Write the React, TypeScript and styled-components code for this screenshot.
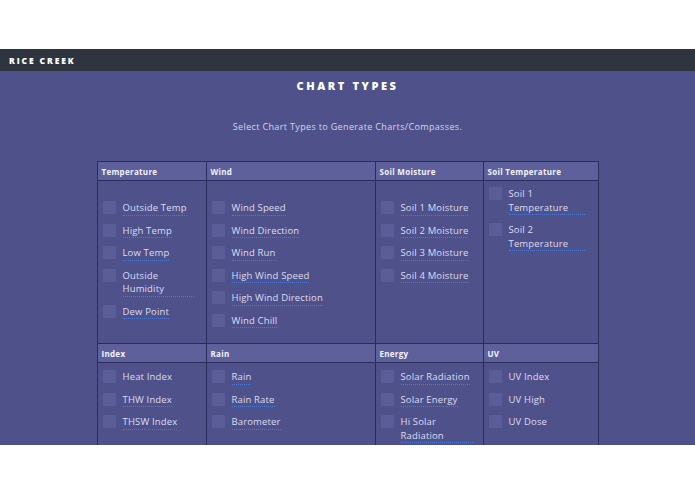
import React from 'react';
import styled, { createGlobalStyle } from 'styled-components';

interface ChartOption {
  label: string;
  underlined?: boolean;
}

interface ChartGroup {
  title: string;
  padTop?: number;
  options: ChartOption[];
}

const GlobalStyle = createGlobalStyle`
  html, body {
    margin: 0;
    padding: 0;
    background: #ffffff;
  }
  body {
    font-family: "Open Sans", "Liberation Sans", sans-serif;
  }
`;

const Page = styled.div`
  padding-top: 49px;
  width: 695px;
`;

const NavBar = styled.header`
  height: 22px;
  background-color: #2f353e;
  display: flex;
  align-items: center;
  padding-left: 9px;
`;

const Brand = styled.div`
  color: #ffffff;
  font-size: 8.5px;
  font-weight: 800;
  letter-spacing: 1.9px;
`;

const Main = styled.main`
  height: 374px;
  overflow: hidden;
  background-color: #4f528a;
  display: flex;
  flex-direction: column;
  align-items: center;
`;

// the bottom of a link that sits hidden under the nav bar
const KickerStub = styled.div`
  width: 40px;
  height: 2px;
  margin-left: 1px;
  background:
    linear-gradient(#a9abd4, #a9abd4) bottom / 100% 1px no-repeat,
    repeating-linear-gradient(90deg, #c4c5e6 0 2px, transparent 2px 5px) top / 100% 1px no-repeat;
`;

const Title = styled.h1`
  margin: 8px 0 0;
  font-size: 11px;
  line-height: 14px;
  font-weight: 800;
  letter-spacing: 2.6px;
  color: #ffffff;
`;

const Divider = styled.div`
  width: 102px;
  height: 1px;
  margin-top: 14px;
  background-color: #42457a;
`;

const Subtitle = styled.p`
  margin: 14px 0 0;
  font-size: 9px;
  line-height: 12px;
  letter-spacing: 0.35px;
  color: #d3d4ec;
`;

const Table = styled.div`
  margin-top: 28px;
  display: grid;
  grid-template-columns: 109px 169px 108px 115px;
  border-left: 1px solid #2a2c5a;
  border-top: 1px solid #2a2c5a;
`;

const HeadCell = styled.div`
  height: 18px;
  display: flex;
  align-items: center;
  padding-left: 4px;
  background-color: #5d609b;
  border-right: 1px solid #2a2c5a;
  border-bottom: 1px solid #2a2c5a;
  color: #f3f3fb;
  font-size: 8px;
  font-weight: 700;
  letter-spacing: 0.3px;
`;

const BodyCell = styled.div<{ $padTop: number; $padRight: number }>`
  padding: ${p => p.$padTop}px ${p => p.$padRight}px 7px 5px;
  border-right: 1px solid #2a2c5a;
  border-bottom: 1px solid #2a2c5a;
`;

const Option = styled.div`
  display: flex;
  align-items: flex-start;
  gap: 7px;
  margin-bottom: 8px;
`;

const Box = styled.span`
  flex: 0 0 13px;
  width: 13px;
  height: 13px;
  background-color: #5a5d97;
  border-radius: 1px;
`;

const Label = styled.span<{ $underlined: boolean }>`
  font-size: 9.5px;
  line-height: 13.5px;
  letter-spacing: 0.15px;
  color: #dcdcf2;
  border-bottom: 1px dotted ${p => (p.$underlined ? '#4b7ad6' : 'transparent')};
`;

const rows: { padTop: number; groups: ChartGroup[] }[] = [
  {
    padTop: 20,
    groups: [
      {
        title: 'Temperature',
        options: [
          { label: 'Outside Temp' },
          { label: 'High Temp' },
          { label: 'Low Temp' },
          { label: 'Outside Humidity' },
          { label: 'Dew Point' },
        ],
      },
      {
        title: 'Wind',
        options: [
          { label: 'Wind Speed' },
          { label: 'Wind Direction' },
          { label: 'Wind Run' },
          { label: 'High Wind Speed' },
          { label: 'High Wind Direction' },
          { label: 'Wind Chill' },
        ],
      },
      {
        title: 'Soil Moisture',
        options: [
          { label: 'Soil 1 Moisture' },
          { label: 'Soil 2 Moisture' },
          { label: 'Soil 3 Moisture' },
          { label: 'Soil 4 Moisture' },
        ],
      },
      {
        title: 'Soil Temperature',
        padTop: 6,
        options: [{ label: 'Soil 1 Temperature' }, { label: 'Soil 2 Temperature' }],
      },
    ],
  },
  {
    padTop: 7,
    groups: [
      {
        title: 'Index',
        options: [
          { label: 'Heat Index', underlined: false },
          { label: 'THW Index' },
          { label: 'THSW Index' },
        ],
      },
      {
        title: 'Rain',
        options: [{ label: 'Rain' }, { label: 'Rain Rate' }, { label: 'Barometer' }],
      },
      {
        title: 'Energy',
        options: [
          { label: 'Solar Radiation' },
          { label: 'Solar Energy' },
          { label: 'Hi Solar Radiation' },
        ],
      },
      {
        title: 'UV',
        options: [
          { label: 'UV Index', underlined: false },
          { label: 'UV High', underlined: false },
          { label: 'UV Dose', underlined: false },
        ],
      },
    ],
  },
];

// right padding per column so long labels wrap where the original does
const padRight = [12, 10, 10, 13];

const App = () => {
  return (
    <Page>
      <GlobalStyle />
      <NavBar>
        <Brand>RICE CREEK</Brand>
      </NavBar>
      <Main>
        <KickerStub />
        <Title>CHART TYPES</Title>
        <Divider />
        <Subtitle>Select Chart Types to Generate Charts/Compasses.</Subtitle>

        <Table>
          {rows.map((row, r) => (
            <React.Fragment key={r}>
              {row.groups.map(g => (
                <HeadCell key={g.title}>{g.title}</HeadCell>
              ))}
              {row.groups.map((g, i) => (
                <BodyCell key={g.title + '-body'} $padTop={g.padTop ?? row.padTop} $padRight={padRight[i]}>
                  {g.options.map(o => (
                    <Option key={o.label}>
                      <Box />
                      <Label $underlined={o.underlined !== false}>{o.label}</Label>
                    </Option>
                  ))}
                </BodyCell>
              ))}
            </React.Fragment>
          ))}
        </Table>
      </Main>
    </Page>
  );
};

export default App;
